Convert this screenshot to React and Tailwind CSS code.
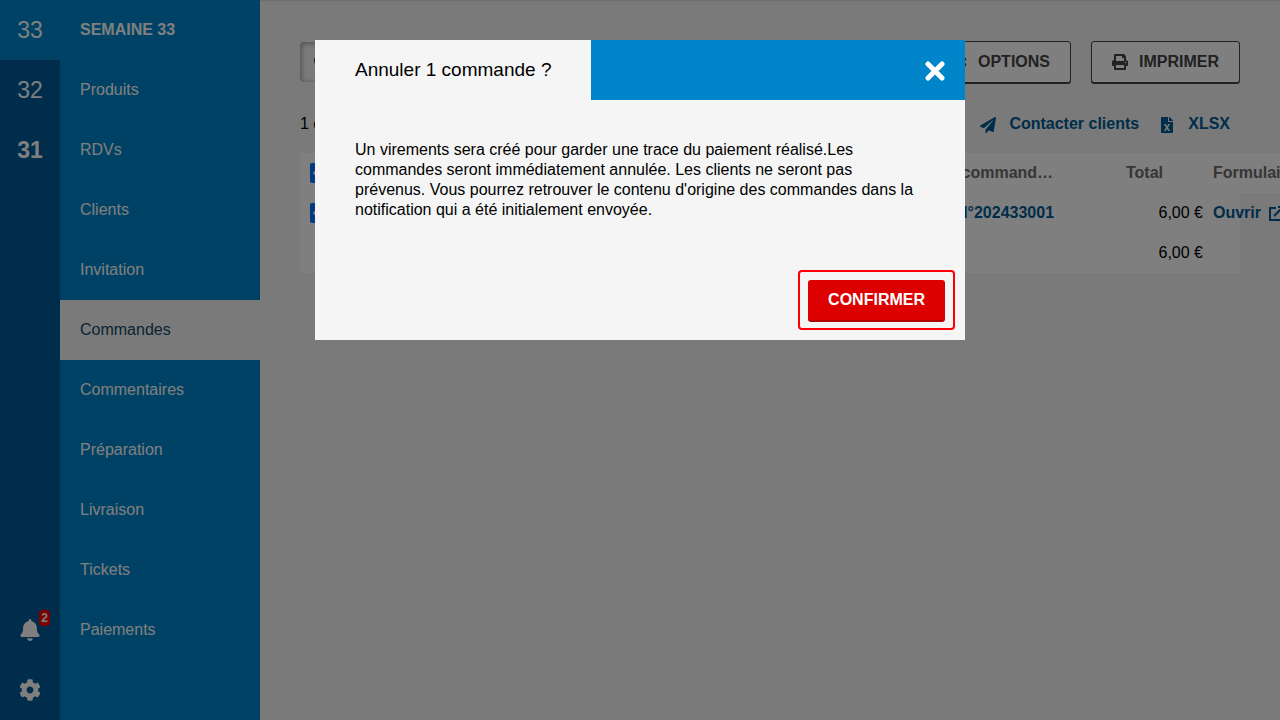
import React, { useState } from 'react';
import { FaBell, FaCog, FaPrint, FaPaperPlane, FaFileExcel, FaSearch, FaCheck } from 'react-icons/fa';

const weeks = [
  { label: '33', className: 'bg-[#0085ca]' },
  { label: '32', className: '' },
  { label: '31', className: 'font-bold' },
];

const menu = [
  'Produits',
  'RDVs',
  'Clients',
  'Invitation',
  'Commandes',
  'Commentaires',
  'Préparation',
  'Livraison',
  'Tickets',
  'Paiements',
];

const CloseIcon = () => (
  <svg viewBox="0 0 20 20" className="mt-0.5 w-5 h-5" fill="none" stroke="currentColor" strokeWidth="5" strokeLinecap="round">
    <path d="M3 3l14 14M17 3L3 17" />
  </svg>
);

const OpenIcon = () => (
  <svg viewBox="0 0 16 16" className="mt-0.5 w-4 h-4 shrink-0" fill="none" stroke="currentColor" strokeWidth="2">
    <path d="M7 2H1v12h12V8M5 10l9-9M9 1h6v6" />
  </svg>
);

const WeekRail = () => (
  <nav aria-label="Semaines" className="w-15 shrink-0 bg-[#005b96] text-white text-[23px] flex flex-col">
    {weeks.map((week) => (
      <a key={week.label} href="#" className={`h-15 flex items-center justify-center ${week.className}`}>
        {week.label}
      </a>
    ))}
    <button type="button" aria-label="Notifications" className="relative mt-auto h-15 flex items-center justify-center">
      <FaBell className="w-[22px] h-[22px]" />
      <span className="absolute top-2.5 right-2.5 rounded-sm bg-[#f00] px-0.5 text-xs leading-4 font-bold">2</span>
    </button>
    <button type="button" aria-label="Réglages" className="h-15 flex items-center justify-center">
      <FaCog className="w-[22px] h-[22px]" />
    </button>
  </nav>
);

const SideMenu = () => (
  <nav aria-label="Menu" className="w-50 shrink-0 bg-[#0085ca] text-white">
    <h2 className="h-15 px-5 flex items-center font-bold">SEMAINE 33</h2>
    {menu.map((item) => (
      <a
        key={item}
        href="#"
        className={`h-15 px-5 flex items-center ${item === 'Commandes' ? 'bg-[#f5f5f5] text-[#0f4a66]' : ''}`}
      >
        {item}
      </a>
    ))}
  </nav>
);

const ToolButton = ({ icon: Icon, children }) => (
  <button
    type="button"
    className="h-[42px] px-5 flex items-center gap-[11px] rounded-[3px] border border-[#444] bg-white font-bold text-[#444] shadow-[0_1px_0_#444]"
  >
    <Icon className="w-4 h-4" />
    {children}
  </button>
);

const ActionLink = ({ icon: Icon, children }) => (
  <a href="#" className="flex items-center gap-[13px] px-2.5 font-bold text-[#005b96]">
    <Icon className="mt-0.5 w-4 h-4" />
    {children}
  </a>
);

const Tick = ({ label }) => (
  <label className="relative block w-5 h-5">
    <input type="checkbox" defaultChecked aria-label={label} className="appearance-none block w-5 h-5 rounded-xs bg-[#0075ff]" />
    <FaCheck className="absolute inset-0 m-auto w-3.5 h-3.5 text-white pointer-events-none" />
  </label>
);

const Orders = () => (
  <div className="bg-white">
    <table className="w-full min-w-[1040px] table-fixed text-left">
      <thead className="text-[#6c6c6c]">
        <tr className="h-10 bg-white">
          <th className="w-10 pl-2.5"><Tick label="Tout sélectionner" /></th>
          <th className="pl-2.5">Client</th>
          <th className="w-[210px] pl-2.5">
            <span className="block w-[140px] truncate">N° de command…</span>
          </th>
          <th className="w-[87px] pl-2.5">Total</th>
          <th className="w-[137px] pl-2.5">Formulaire</th>
        </tr>
      </thead>
      <tbody>
        <tr className="h-10">
          <td className="pl-2.5"><Tick label="Sélectionner la commande" /></td>
          <td className="pl-2.5">Client</td>
          <td className="pl-2.5">
            <a href="#" className="font-bold text-[#005b96]">Cmd N°202433001</a>
          </td>
          <td className="text-right">6,00 €</td>
          <td className="pl-2.5">
            <a href="#" className="flex items-center gap-2 font-bold text-[#005b96]">
              Ouvrir <OpenIcon />
            </a>
          </td>
        </tr>
        <tr className="h-10">
          <td colSpan={3}></td>
          <td className="text-right">6,00 €</td>
          <td></td>
        </tr>
      </tbody>
    </table>
  </div>
);

const CancelDialog = ({ onClose }) => (
  <div className="fixed inset-0 z-10 bg-black/50 px-5 py-10">
    <div role="dialog" aria-modal="true" aria-labelledby="dialog-title" className="mx-auto max-w-[650px] bg-[#f5f5f5]">
      <header className="h-15 flex justify-between bg-[#0085ca]">
        <h1 id="dialog-title" className="flex items-center bg-[#f5f5f5] px-10 text-[19px]">Annuler 1 commande ?</h1>
        <button type="button" aria-label="Fermer" onClick={onClose} className="w-15 flex items-center justify-center text-white">
          <CloseIcon />
        </button>
      </header>
      <p className="p-10">
        Un virements sera créé pour garder une trace du paiement réalisé.Les commandes seront immédiatement annulée. Les
        clients ne seront pas prévenus. Vous pourrez retrouver le contenu d'origine des commandes dans la notification
        qui a été initialement envoyée.
      </p>
      <footer className="flex justify-end p-2.5">
        <div className="rounded-sm border-2 border-[#f00] p-2">
          <button
            type="button"
            onClick={onClose}
            className="h-10 px-5 rounded-[3px] bg-[#dc0000] font-bold text-white shadow-[0_2px_0_#b00000]"
          >
            CONFIRMER
          </button>
        </div>
      </footer>
    </div>
  </div>
);

const App = () => {
  const [open, setOpen] = useState(true);

  return (
    <div className="min-h-screen flex bg-[#f5f5f5] font-['Liberation_Sans',Arial,sans-serif] text-base leading-5 text-black">
      <WeekRail />
      <SideMenu />

      <main className="flex-1 min-w-0 overflow-hidden border-t border-[#ddd] p-10">
        <div className="flex items-center gap-5">
          <label className="relative flex-1 min-w-0">
            <FaSearch className="absolute left-3.5 top-3 w-4 h-4 text-[#444]" />
            <input
              type="search"
              aria-label="Rechercher"
              className="block w-full h-10 rounded-sm bg-[#f5f5f5] pl-10 shadow-[inset_1px_1px_4px_1px_#aaa]"
            />
          </label>
          <ToolButton icon={FaCog}>OPTIONS</ToolButton>
          <ToolButton icon={FaPrint}>IMPRIMER</ToolButton>
        </div>

        <div className="mt-[21px] mb-[9px] h-10 flex items-center">
          <p className="mr-auto">1 commande</p>
          <ActionLink icon={FaPaperPlane}>Contacter clients</ActionLink>
          <ActionLink icon={FaFileExcel}>XLSX</ActionLink>
        </div>

        <Orders />
      </main>

      {open && <CancelDialog onClose={() => setOpen(false)} />}
    </div>
  );
};

export default App;
